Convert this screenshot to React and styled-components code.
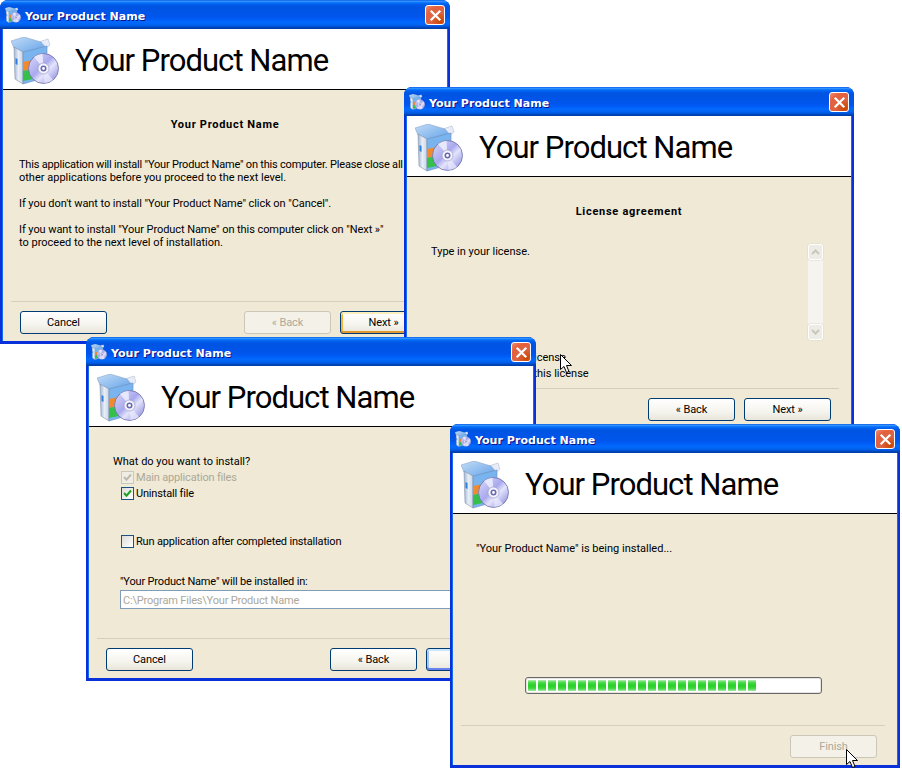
import React from "react";
import styled, { createGlobalStyle } from "styled-components";

const Global = createGlobalStyle`
  html, body { margin: 0; padding: 0; background: #fff; }
  * { box-sizing: border-box; }
`;
const UI = `Roboto, "Liberation Sans", Arial, sans-serif`;

const Desktop = styled.div`
  position: relative;
  width: 902px;
  height: 768px;
  background: #fff;
  overflow: hidden;
  font: 11px/13px ${UI};
  color: #000;
`;
const Win = styled.section`
  position: absolute;
  left: ${(p) => p.$x}px;
  top: ${(p) => p.$y}px;
  width: 450px;
  height: 344px;
  display: flex;
  flex-direction: column;
  border-radius: 8px 8px 0 0;
  overflow: hidden;
  background: #0831d9;
`;
const TitleBar = styled.div`
  height: 29px;
  flex: none;
  display: flex;
  align-items: center;
  gap: 4px;
  padding: 1px 5px 0 5px;
  background: linear-gradient(180deg, #0058e6 0%, #3a93ff 4%, #288eff 6%, #127dff 8%, #036ffc 10%, #0262ee 14%, #0057e5 20%, #0054e3 24%, #0055eb 56%, #005bf5 66%, #026afe 76%, #0062ef 86%, #0052d6 92%, #0040ab 96%, #0040ab 100%);
`;
const TitleText = styled.span`
  flex: 1;
  margin-top: 3px;
  font: bold 11px/16px "DejaVu Sans", sans-serif;
  letter-spacing: 0.05px;
  color: #fff;
  text-shadow: 1px 1px 0 #0f1089;
`;
const Close = styled.span`
  width: 20px;
  height: 20px;
  border: 1px solid #fff;
  border-radius: 3px;
  background: radial-gradient(circle at 80% 85%, #cc4600 0%, #dc6545 45%, #e5603d 70%, #e98e75 100%);
  display: flex;
  align-items: center;
  justify-content: center;
`;
const Frame = styled.div`
  flex: 1;
  min-height: 0;
  display: flex;
  flex-direction: column;
  margin: 0 3px 3px;
  box-shadow: -1px 0 0 #166aee, 1px 0 0 #166aee;
`;
const Header = styled.header`
  height: 61px;
  flex: none;
  display: flex;
  align-items: center;
  gap: 16px;
  padding: 3px 0 0 8px;
  background: #fff;
  border-bottom: 1px solid #000;
`;
const ProductName = styled.h1`
  margin: 0;
  font: 400 31px/40px ${UI};
  letter-spacing: -0.95px;
  white-space: nowrap;
`;
const Panel = styled.div`
  flex: 1;
  min-height: 0;
  display: flex;
  flex-direction: column;
  background: #efe9d6;
`;
const Content = styled.div`
  flex: 1;
  min-height: 0;
  display: flex;
  flex-direction: column;
  padding: 28px 0 0 ${(p) => p.$left ?? 16}px;
`;
const Heading = styled.div`
  font-weight: bold;
  letter-spacing: 0.72px;
  text-align: center;
  margin: 0 0 27px -16px;
  white-space: nowrap;
`;
const Para = styled.p`
  margin: 0 0 13px;
  white-space: nowrap;
`;
const Line = styled.span`
  display: block;
  letter-spacing: ${(p) => p.$track ?? 0}px;
`;
const Divider = styled.hr`
  width: 424px;
  margin: 0 0 0 8px;
  height: 1px;
  border: 0;
  background: #d4cfbd;
  flex: none;
`;
const Footer = styled.footer`
  flex: none;
  display: flex;
  gap: 9px;
  padding: 9px 20px 7px 17px;
`;
const Btn = styled.button`
  width: 87px;
  height: 23px;
  padding: 0;
  font: 11px/13px ${UI};
  letter-spacing: -0.1px;
  color: #000;
  border: 1px solid #003c74;
  border-radius: 3px;
  background: linear-gradient(180deg, #fff 0%, #f5f4ee 60%, #e8e6da 100%);
  &:first-child { margin-right: auto; }
`;
const FocusBtn = styled(Btn)`
  box-shadow: inset 0 2px 0 ${(p) => p.$top}, inset 0 -2px 0 ${(p) => p.$bottom}, inset 2px 0 0 ${(p) => p.$side}, inset -2px 0 0 ${(p) => p.$side};
`;
const OffBtn = styled(Btn)`
  border-color: #cbc7b8;
  background: #f4f2e8;
  color: #aca899;
`;
const Spacer = styled.span`
  margin-right: auto;
`;
const LicenseRow = styled.div`
  display: flex;
  justify-content: space-between;
  height: 96px;
  margin-top: -7px;
  padding: 7px 28px 0 8px;
`;
const Scroll = styled.div`
  width: 15px;
  height: 96px;
  margin-top: -1px;
  display: flex;
  flex-direction: column;
  justify-content: space-between;
  background: #f5f4ef;
`;
const ScrollBtn = styled.div`
  width: 15px;
  height: 16px;
  display: flex;
  align-items: center;
  justify-content: center;
  background: #eeede5;
  border: 1px solid #fff;
  box-shadow: 0 0 0 0.5px #dedcd0;
  border-radius: 2px;
`;
const RadioLine = styled.div`
  height: 16px;
  margin-top: ${(p) => p.$mt ?? 0}px;
  padding-left: ${(p) => p.$pad}px;
  white-space: nowrap;
  line-height: 16px;
`;
const Question = styled.div`
  white-space: nowrap;
`;
const CheckRow = styled.label`
  display: flex;
  align-items: center;
  gap: 2px;
  height: 16px;
  margin-left: 8px;
  margin-top: ${(p) => p.$mt ?? 0}px;
  white-space: nowrap;
  letter-spacing: -0.17px;
  color: ${(p) => (p.$off ? "#aca899" : "#000")};
  &:first-of-type { margin-top: 1px; }
`;
const Box = styled.span`
  width: 13px;
  height: 13px;
  flex: none;
  display: flex;
  align-items: center;
  justify-content: center;
  border: 1px solid ${(p) => (p.$off ? "#cac8bb" : "#1c5180")};
  background: ${(p) => (p.$off ? "#f0eee4" : "linear-gradient(135deg, #dcdcd7, #fff)")};
`;
const PathLabel = styled.div`
  margin: 26px 0 2px 7px;
  white-space: nowrap;
  letter-spacing: -0.17px;
`;
const PathInput = styled.div`
  width: 393px;
  height: 19px;
  margin-left: 7px;
  padding: 0 2px;
  line-height: 19px;
  letter-spacing: -0.18px;
  border: 1px solid #7f9db9;
  background: #fff;
  color: #aca899;
  white-space: nowrap;
`;
const Progress = styled.div`
  width: 297px;
  height: 17px;
  margin: 122px 0 0 49px;
  padding: 2px 2px;
  display: flex;
  gap: 2px;
  background: #fff;
  border: 1px solid #686868;
  border-radius: 3px;
  box-shadow: inset 0 0 0 1px #e4e4e0;
`;
const Chunk = styled.span`
  width: 8px;
  height: 11px;
  flex: none;
  background: linear-gradient(180deg, #b8ecb8 0%, #4dd94d 22%, #28d028 50%, #3dd63d 75%, #a5e8a5 100%);
`;
const Pointer = styled.svg`
  position: absolute;
  left: ${(p) => p.$x}px;
  top: ${(p) => p.$y}px;
`;

const ProductIcon = ({ size }) => (
  <svg width={size} height={size} viewBox="0 0 48 48" style={{ flex: "none" }}>
    <defs>
      <linearGradient id="cdg" x1="0" y1="0" x2="1" y2="1">
        <stop offset="0" stopColor="#dcdcfa" />
        <stop offset="0.45" stopColor="#a9a9ee" />
        <stop offset="0.6" stopColor="#e4e4fc" />
        <stop offset="1" stopColor="#7c7cd8" />
      </linearGradient>
      <linearGradient id="sideg" x1="0" y1="0" x2="1" y2="0">
        <stop offset="0" stopColor="#9fb6d6" />
        <stop offset="0.5" stopColor="#e8eef8" />
        <stop offset="1" stopColor="#c8d4e4" />
      </linearGradient>
      <linearGradient id="flapg" x1="0" y1="0" x2="1" y2="1">
        <stop offset="0" stopColor="#c4dcf6" />
        <stop offset="1" stopColor="#5c9fe8" />
      </linearGradient>
    </defs>
    <path d="M28 5 L37 2 L39 8 L33 13 Z" fill="#e8ecf8" stroke="#b4bcd0" strokeWidth="0.6" />
    <path d="M0 4 L13 0 L30 5 L36 12 L14 17 L3 11 Z" fill="url(#flapg)" stroke="#8ca8cc" strokeWidth="0.6" />
    <path d="M3 10 L12 15 L12 47 L4 42 Z" fill="url(#sideg)" stroke="#8492a8" strokeWidth="0.6" />
    <path d="M12 15 L36 9 L36 40 L12 47 Z" fill="#79b4ee" stroke="#6b8fbd" strokeWidth="0.6" />
    <path d="M4.5 21 L6.5 22 L6.5 28 L4.5 27 Z" fill="#2f7fe0" />
    <path d="M12 25 L22 23 L22 32 L12 34 Z" fill="#f08a2c" />
    <path d="M12 34 L22 32 L22 42 L12 44 Z" fill="#34c04a" />
    <circle cx="32.5" cy="31.5" r="15" fill="url(#cdg)" stroke="#6e6ea8" strokeWidth="0.8" />
    <path d="M32.5 31.5 L23 20 A15 15 0 0 1 31.5 16.8 Z" fill="#f1f1ff" opacity="0.8" />
    <path d="M32.5 31.5 L42 43 A15 15 0 0 1 33.5 46 Z" fill="#ececff" opacity="0.7" />
    <circle cx="32.5" cy="31.5" r="5.5" fill="#f2f2fc" stroke="#8f8fc0" strokeWidth="0.6" />
    <circle cx="32.5" cy="31.5" r="3" fill="#6a6ab4" />
    <circle cx="32.5" cy="31.5" r="1.4" fill="#fff" />
  </svg>
);

const CloseGlyph = () => (
  <svg width="13" height="13" viewBox="0 0 13 13">
    <path d="M2.5 2.5 L10.5 10.5 M10.5 2.5 L2.5 10.5" stroke="#fff" strokeWidth="2.2" strokeLinecap="square" />
  </svg>
);

const Tick = ({ color }) => (
  <svg width="9" height="9" viewBox="0 0 9 9">
    <path d="M1 4 L3.5 6.7 L8 1.5" fill="none" stroke={color} strokeWidth="2" />
  </svg>
);

const Chevron = ({ up }) => (
  <svg width="9" height="6" viewBox="0 0 9 6">
    <path d={up ? "M1 5 L4.5 1.5 L8 5" : "M1 1 L4.5 4.5 L8 1"} fill="none" stroke="#c9c7ba" strokeWidth="2" />
  </svg>
);

const Cursor = ({ x, y }) => (
  <Pointer $x={x} $y={y} width="13" height="20" viewBox="0 0 13 20">
    <path d="M0.5 0.5 L0.5 15.5 L4 12.5 L6.5 18.5 L9 17.5 L6.5 11.5 L11.5 11.5 Z" fill="#fff" stroke="#000" strokeWidth="1" />
  </Pointer>
);

const Dialog = ({ x, y, children }) => (
  <Win $x={x} $y={y}>
    <TitleBar>
      <ProductIcon size={16} />
      <TitleText>Your Product Name</TitleText>
      <Close><CloseGlyph /></Close>
    </TitleBar>
    <Frame>
      <Header>
        <ProductIcon size={48} />
        <ProductName>Your Product Name</ProductName>
      </Header>
      <Panel>{children}</Panel>
    </Frame>
  </Win>
);

export default function App() {
  return (
    <Desktop>
      <Global />
      <Dialog x={0} y={0}>
        <Content>
          <Heading>Your Product Name</Heading>
          <Para>
            <Line $track={-0.2}>This application will install "Your Product Name" on this computer. Please close all</Line>
            <Line>other applications before you proceed to the next level.</Line>
          </Para>
          <Para><Line $track={-0.06}>If you don't want to install "Your Product Name" click on "Cancel".</Line></Para>
          <Para>
            <Line $track={-0.07}>If you want to install "Your Product Name" on this computer click on "Next »"</Line>
            <Line>to proceed to the next level of installation.</Line>
          </Para>
        </Content>
        <Divider />
        <Footer>
          <Btn>Cancel</Btn>
          <OffBtn>« Back</OffBtn>
          <FocusBtn $top="#fdeebd" $bottom="#e5972f" $side="#f8b636">Next »</FocusBtn>
        </Footer>
      </Dialog>

      <Dialog x={404} y={87}>
        <Content>
          <Heading>License agreement</Heading>
          <LicenseRow>
            <span>Type in your license.</span>
            <Scroll>
              <ScrollBtn><Chevron up /></ScrollBtn>
              <ScrollBtn><Chevron /></ScrollBtn>
            </Scroll>
          </LicenseRow>
          <RadioLine $pad={46} $mt={16}>I accept this license</RadioLine>
          <RadioLine $pad={35}>I do not accept this license</RadioLine>
        </Content>
        <Divider />
        <Footer>
          <Spacer />
          <Btn>« Back</Btn>
          <Btn>Next »</Btn>
        </Footer>
      </Dialog>
      <Cursor x={560} y={354} />

      <Dialog x={86} y={337}>
        <Content $left={24}>
          <Question>What do you want to install?</Question>
          <CheckRow $off><Box $off><Tick color="#bdbbae" /></Box>Main application files</CheckRow>
          <CheckRow><Box><Tick color="#21a121" /></Box>Uninstall file</CheckRow>
          <CheckRow $mt={32}><Box />Run application after completed installation</CheckRow>
          <PathLabel>"Your Product Name" will be installed in:</PathLabel>
          <PathInput>C:\Program Files\Your Product Name</PathInput>
        </Content>
        <Divider />
        <Footer>
          <Btn>Cancel</Btn>
          <Btn>« Back</Btn>
          <FocusBtn $top="#cee7ff" $bottom="#6982ee" $side="#a8c4f0">Next »</FocusBtn>
        </Footer>
      </Dialog>

      <Dialog x={450} y={424}>
        <Content $left={23}>
          <Question>"Your Product Name" is being installed...</Question>
          <Progress>
            {Array.from({ length: 23 }, (_, i) => <Chunk key={i} />)}
          </Progress>
        </Content>
        <Divider />
        <Footer>
          <Spacer />
          <OffBtn>Finish</OffBtn>
        </Footer>
      </Dialog>
      <Cursor x={846} y={749} />
    </Desktop>
  );
}
